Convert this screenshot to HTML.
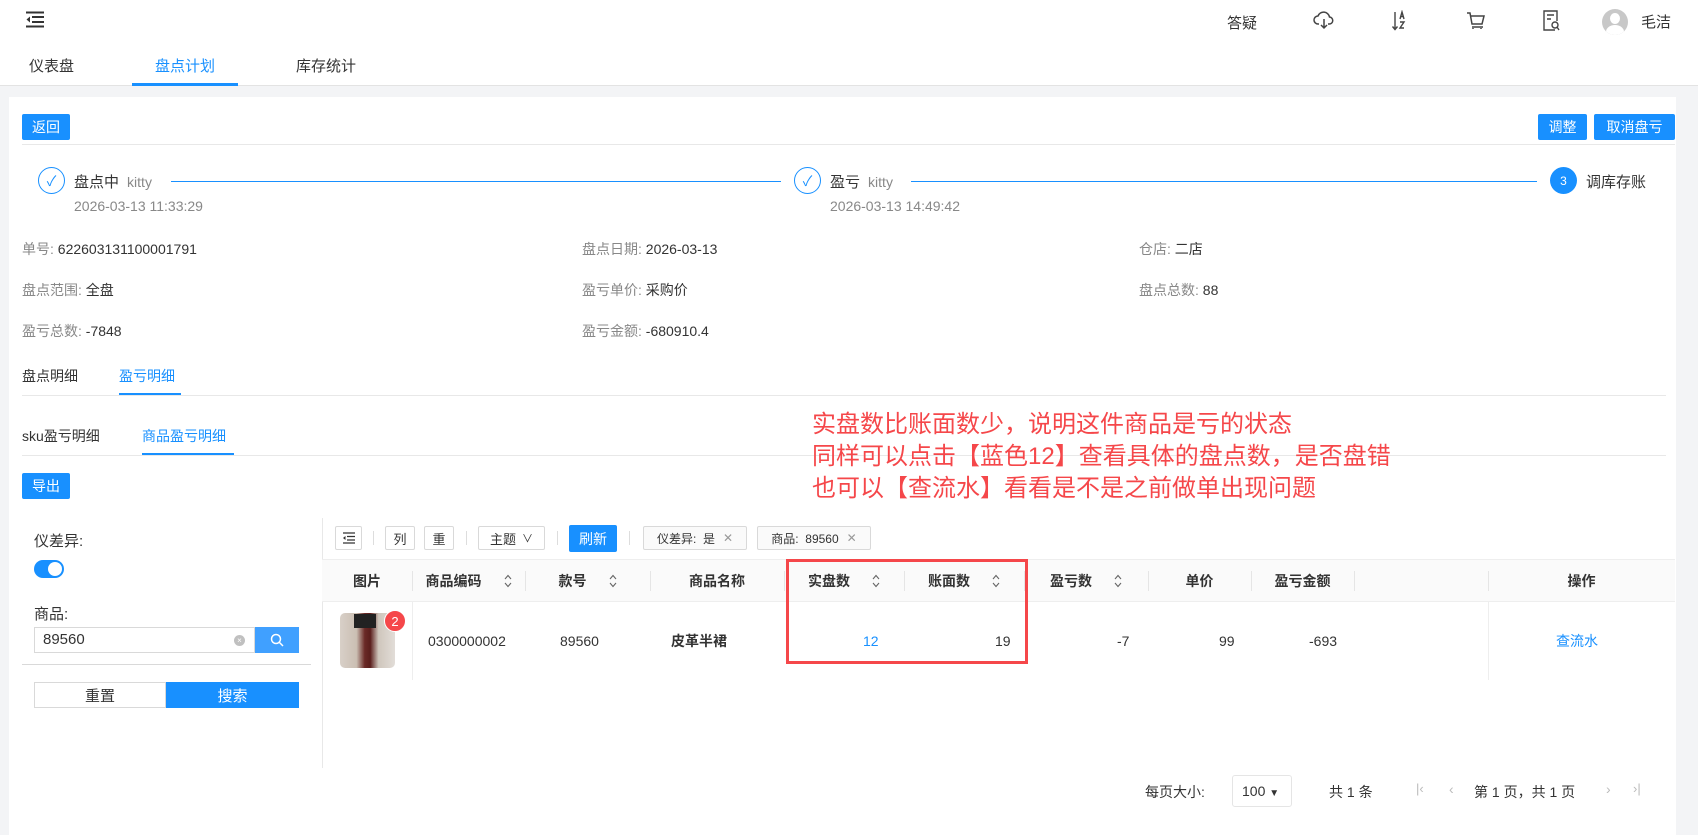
<!DOCTYPE html>
<html><head><meta charset="utf-8"><style>
*{box-sizing:border-box;margin:0;padding:0}
body{width:1698px;height:835px;overflow:hidden;background:#f3f4f6;font-family:"Liberation Sans","Noto Sans CJK SC",sans-serif;font-size:14px;color:#333;position:relative}
.a{position:absolute;white-space:nowrap}
.btn{position:absolute;background:#1890ff;color:#fff;font-size:14px;display:flex;align-items:center;justify-content:center;border-radius:2px}
.g{color:#888}
.tb{position:absolute;top:526px;height:24px;border:1px solid #d9d9d9;border-radius:2px;background:#fff;display:flex;align-items:center;justify-content:center;font-size:13px}
.th{position:absolute;top:559px;height:43px;display:flex;align-items:center;justify-content:center;font-weight:bold;color:#333}
.td{position:absolute;top:602px;height:78px;display:flex;align-items:center;color:#333}
.sep{position:absolute;top:571px;width:1px;height:20px;background:#e5e5e5}
.sort{margin-left:22px;display:inline-block;width:8px;height:14px}
</style></head><body>
<svg width="0" height="0" style="position:absolute"><defs><symbol id="s" viewBox="0 0 8 14"><path d="M1 5l3-3.5L7 5M1 9l3 3.5L7 9" fill="none" stroke="#666" stroke-width="1.1"/></symbol></defs></svg>
<!-- header -->
<div class="a" style="left:0;top:0;width:1698px;height:43px;background:#fff;box-shadow:0 1px 3px rgba(0,0,0,.06)"></div>
<svg class="a" style="left:25px;top:11px" width="20" height="17" viewBox="0 0 20 17"><path d="M1 1.5h18M7 6h12M7 11h12M1 15.5h18" stroke="#333" stroke-width="2"/><path d="M5 5.5L1.5 8.5 5 11.5z" fill="#333"/></svg>
<div class="a" style="left:1227px;top:12px;font-size:15px">答疑</div>
<svg class="a" style="left:1313px;top:10px" width="22" height="20" viewBox="0 0 22 20" fill="none" stroke="#444" stroke-width="1.5"><path d="M6 14H5a4 4 0 0 1 0-8 6 6 0 0 1 11.5 1A3.5 3.5 0 0 1 16 14h-1"/><path d="M11 9v9M8 15l3 3 3-3"/></svg>
<svg class="a" style="left:1391px;top:10px" width="18" height="22" viewBox="0 0 18 22" fill="none" stroke="#444" stroke-width="1.4"><path d="M4 2v17M1.5 16.5L4 19.5l2.5-3"/><path d="M9 9l2-7 2 7M9.7 6.5h2.6M9 12h4l-4 6h4"/></svg>
<svg class="a" style="left:1466px;top:11px" width="20" height="20" viewBox="0 0 20 20" fill="none" stroke="#444" stroke-width="1.5"><path d="M1 2h3l2 11h10l2-8H5M7 17v1M15 17v1M6 16h11"/></svg>
<svg class="a" style="left:1542px;top:9px" width="18" height="23" viewBox="0 0 18 23" fill="none" stroke="#444" stroke-width="1.4"><path d="M13 21H2V2h13v10"/><path d="M5 6h7M5 10h4"/><circle cx="13" cy="16" r="3"/><path d="M15 18l2 3"/></svg>
<div class="a" style="left:1602px;top:9px;width:26px;height:26px;border-radius:50%;background:#c8c8c8;overflow:hidden"><div class="a" style="left:8px;top:4px;width:10px;height:11px;border-radius:50%;background:#fff"></div><div class="a" style="left:4px;top:16px;width:18px;height:14px;border-radius:50%;background:#fff"></div></div>
<div class="a" style="left:1641px;top:11px;font-size:15px">毛洁</div>
<!-- tabs -->
<div class="a" style="left:0;top:43px;width:1698px;height:43px;background:#fff;border-bottom:1px solid #e3e3e3"></div>
<div class="a" style="left:29px;top:55px;font-size:15px">仪表盘</div>
<div class="a" style="left:155px;top:55px;font-size:15px;color:#1890ff">盘点计划</div>
<div class="a" style="left:132px;top:83px;width:106px;height:3px;background:#1890ff"></div>
<div class="a" style="left:296px;top:55px;font-size:15px">库存统计</div>
<!-- card -->
<div class="a" style="left:9px;top:97px;width:1667px;height:738px;background:#fff"></div>
<div class="btn" style="left:22px;top:114px;width:48px;height:26px">返回</div>
<div class="btn" style="left:1538px;top:114px;width:49px;height:26px">调整</div>
<div class="btn" style="left:1594px;top:114px;width:81px;height:26px">取消盘亏</div>
<div class="a" style="left:22px;top:144px;width:1653px;height:1px;background:#e8e8e8"></div>
<!-- steps -->
<div class="a" style="left:38px;top:167px;width:27px;height:27px;border:1px solid #1890ff;border-radius:50%;color:#1890ff;display:flex;align-items:center;justify-content:center;font-size:14px">✓</div>
<div class="a" style="left:74px;top:171px;font-size:15px">盘点中 <span class="g" style="font-size:14px">&nbsp;kitty</span></div>
<div class="a g" style="left:74px;top:198px">2026-03-13 11:33:29</div>
<div class="a" style="left:171px;top:181px;width:610px;height:1px;background:#1890ff"></div>
<div class="a" style="left:794px;top:167px;width:27px;height:27px;border:1px solid #1890ff;border-radius:50%;color:#1890ff;display:flex;align-items:center;justify-content:center;font-size:14px">✓</div>
<div class="a" style="left:830px;top:171px;font-size:15px">盈亏 <span class="g" style="font-size:14px">&nbsp;kitty</span></div>
<div class="a g" style="left:830px;top:198px">2026-03-13 14:49:42</div>
<div class="a" style="left:911px;top:181px;width:626px;height:1px;background:#1890ff"></div>
<div class="a" style="left:1550px;top:167px;width:27px;height:27px;background:#1890ff;border-radius:50%;color:#fff;display:flex;align-items:center;justify-content:center;font-size:12px">3</div>
<div class="a" style="left:1586px;top:171px;font-size:15px">调库存账</div>
<!-- info -->
<div class="a" style="left:22px;top:239px"><span class="g">单号: </span>622603131100001791</div>
<div class="a" style="left:582px;top:239px"><span class="g">盘点日期: </span>2026-03-13</div>
<div class="a" style="left:1139px;top:239px"><span class="g">仓店: </span>二店</div>
<div class="a" style="left:22px;top:280px"><span class="g">盘点范围: </span>全盘</div>
<div class="a" style="left:582px;top:280px"><span class="g">盈亏单价: </span>采购价</div>
<div class="a" style="left:1139px;top:280px"><span class="g">盘点总数: </span>88</div>
<div class="a" style="left:22px;top:321px"><span class="g">盈亏总数: </span>-7848</div>
<div class="a" style="left:582px;top:321px"><span class="g">盈亏金额: </span>-680910.4</div>
<!-- sub tabs -->
<div class="a" style="left:22px;top:366px">盘点明细</div>
<div class="a" style="left:119px;top:366px;color:#1890ff">盈亏明细</div>
<div class="a" style="left:119px;top:393px;width:62px;height:2px;background:#1890ff"></div>
<div class="a" style="left:22px;top:395px;width:1644px;height:1px;background:#e8e8e8"></div>
<div class="a" style="left:22px;top:426px">sku盈亏明细</div>
<div class="a" style="left:142px;top:426px;color:#1890ff">商品盈亏明细</div>
<div class="a" style="left:142px;top:453px;width:92px;height:3px;background:#1890ff"></div>
<div class="a" style="left:22px;top:455px;width:1644px;height:1px;background:#e8e8e8"></div>
<div class="btn" style="left:22px;top:473px;width:48px;height:26px">导出</div>
<!-- annotation -->
<div class="a" style="left:812px;top:409px;font-size:24px;line-height:32px;color:#f5474a">实盘数比账面数少，说明这件商品是亏的状态<br>同样可以点击【蓝色12】查看具体的盘点数，是否盘错<br>也可以【查流水】看看是不是之前做单出现问题</div>
<!-- left filter -->
<div class="a" style="left:34px;top:530px;font-size:15px">仪差异:</div>
<div class="a" style="left:34px;top:560px;width:30px;height:18px;border-radius:9px;background:#1890ff"><div class="a" style="left:14px;top:2px;width:14px;height:14px;border-radius:50%;background:#fff"></div></div>
<div class="a" style="left:34px;top:603px;font-size:15px">商品:</div>
<div class="a" style="left:34px;top:627px;width:221px;height:26px;border:1px solid #d9d9d9;padding:3px 8px;font-size:15px">89560</div>
<div class="a" style="left:234px;top:635px;width:11px;height:11px;border-radius:50%;background:#c0c0c0;color:#fff;font-size:8px;text-align:center;line-height:11px">×</div>
<div class="a" style="left:255px;top:627px;width:44px;height:26px;background:#40a0ff;display:flex;align-items:center;justify-content:center"><svg width="14" height="14" viewBox="0 0 14 14" fill="none" stroke="#fff" stroke-width="1.5"><circle cx="6" cy="6" r="4.5"/><path d="M9.5 9.5l3.5 3.5"/></svg></div>
<div class="a" style="left:22px;top:664px;width:289px;height:1px;background:#d9d9d9"></div>
<div class="a" style="left:34px;top:682px;width:132px;height:26px;border:1px solid #d9d9d9;display:flex;align-items:center;justify-content:center;font-size:15px">重置</div>
<div class="btn" style="left:166px;top:682px;width:133px;height:26px;border-radius:0;font-size:15px">搜索</div>
<div class="a" style="left:322px;top:518px;width:1px;height:250px;background:#e8e8e8"></div>
<!-- toolbar -->
<div class="tb" style="left:335px;width:27px"><svg width="14" height="12" viewBox="0 0 14 12"><path d="M1 1h12M5 4.5h8M5 8h8M1 11h12" stroke="#333" stroke-width="1.2"/><path d="M3.5 4L1 6l2.5 2z" fill="#333"/></svg></div>
<div class="a" style="left:373px;top:531px;width:1px;height:14px;background:#ddd"></div>
<div class="tb" style="left:385px;width:30px">列</div>
<div class="tb" style="left:424px;width:30px">重</div>
<div class="a" style="left:466px;top:531px;width:1px;height:14px;background:#ddd"></div>
<div class="tb" style="left:478px;width:67px">主题 <span style="margin-left:6px;font-size:11px">∨</span></div>
<div class="a" style="left:557px;top:531px;width:1px;height:14px;background:#ddd"></div>
<div class="btn" style="left:569px;top:525px;width:48px;height:27px;font-size:14px">刷新</div>
<div class="a" style="left:629px;top:531px;width:1px;height:14px;background:#ddd"></div>
<div class="tb" style="left:643px;width:104px;background:#fafafa;font-size:12px">仪差异: &nbsp;是 <span style="color:#999;margin-left:8px">✕</span></div>
<div class="tb" style="left:757px;width:114px;background:#fafafa;font-size:12px">商品: &nbsp;89560 <span style="color:#999;margin-left:8px">✕</span></div>
<!-- table -->
<div class="a" style="left:322px;top:559px;width:1353px;height:43px;background:#fafafa;border-top:1px solid #eee;border-bottom:1px solid #eee"></div>
<div class="th" style="left:322px;width:90px">图片</div>
<div class="th" style="left:412px;width:113px">商品编码<svg class="sort"><use href="#s"/></svg></div>
<div class="th" style="left:525px;width:125px">款号<svg class="sort"><use href="#s"/></svg></div>
<div class="th" style="left:650px;width:134px">商品名称</div>
<div class="th" style="left:784px;width:120px">实盘数<svg class="sort"><use href="#s"/></svg></div>
<div class="th" style="left:904px;width:120px">账面数<svg class="sort"><use href="#s"/></svg></div>
<div class="th" style="left:1024px;width:124px">盈亏数<svg class="sort"><use href="#s"/></svg></div>
<div class="th" style="left:1148px;width:103px">单价</div>
<div class="th" style="left:1251px;width:103px">盈亏金额</div>
<div class="th" style="left:1488px;width:187px">操作</div>
<div class="sep" style="left:412px"></div><div class="sep" style="left:525px"></div><div class="sep" style="left:650px"></div><div class="sep" style="left:784px"></div><div class="sep" style="left:904px"></div><div class="sep" style="left:1024px"></div><div class="sep" style="left:1148px"></div><div class="sep" style="left:1251px"></div><div class="sep" style="left:1354px"></div><div class="sep" style="left:1488px"></div>
<div class="a" style="left:412px;top:602px;width:1px;height:78px;background:#eee"></div>
<div class="a" style="left:1488px;top:602px;width:1px;height:78px;background:#eee"></div>
<div class="a" style="left:340px;top:613px;width:55px;height:55px;border-radius:5px;background:linear-gradient(90deg,#d8d0c8 0%,#cbbfb3 30%,#6a2a26 45%,#5a1e1c 55%,#cfc6bc 70%,#e2ddd8 100%)"></div>
<div class="a" style="left:354px;top:614px;width:22px;height:14px;background:#222"></div>
<div class="a" style="left:384px;top:610px;width:22px;height:22px;border-radius:50%;background:#f5474a;color:#fff;font-size:13px;display:flex;align-items:center;justify-content:center;border:1px solid #fff">2</div>
<div class="td" style="left:428px">0300000002</div>
<div class="td" style="left:560px">89560</div>
<div class="td" style="left:671px;font-weight:bold">皮革半裙</div>
<div class="td" style="left:863px;color:#1890ff">12</div>
<div class="td" style="left:995px">19</div>
<div class="td" style="left:1117px">-7</div>
<div class="td" style="left:1219px">99</div>
<div class="td" style="left:1309px">-693</div>
<div class="td" style="left:1556px;color:#1890ff">查流水</div>
<div class="a" style="left:786px;top:559px;width:242px;height:105px;border:3px solid #f5474a"></div>
<!-- pagination -->
<div class="a" style="left:1145px;top:782px">每页大小:</div>
<div class="a" style="left:1232px;top:775px;width:60px;height:32px;border:1px solid #e5e5e5;border-radius:3px;padding:7px 9px">100 <span style="font-size:10px">▼</span></div>
<div class="a" style="left:1329px;top:782px">共 1 条</div>
<div class="a" style="left:1416px;top:781px;color:#bbb;font-size:13px">|‹</div>
<div class="a" style="left:1449px;top:781px;color:#bbb;font-size:14px">‹</div>
<div class="a" style="left:1474px;top:782px">第 1 页，共 1 页</div>
<div class="a" style="left:1606px;top:781px;color:#bbb;font-size:14px">›</div>
<div class="a" style="left:1633px;top:781px;color:#bbb;font-size:13px">›|</div>
</body></html>
